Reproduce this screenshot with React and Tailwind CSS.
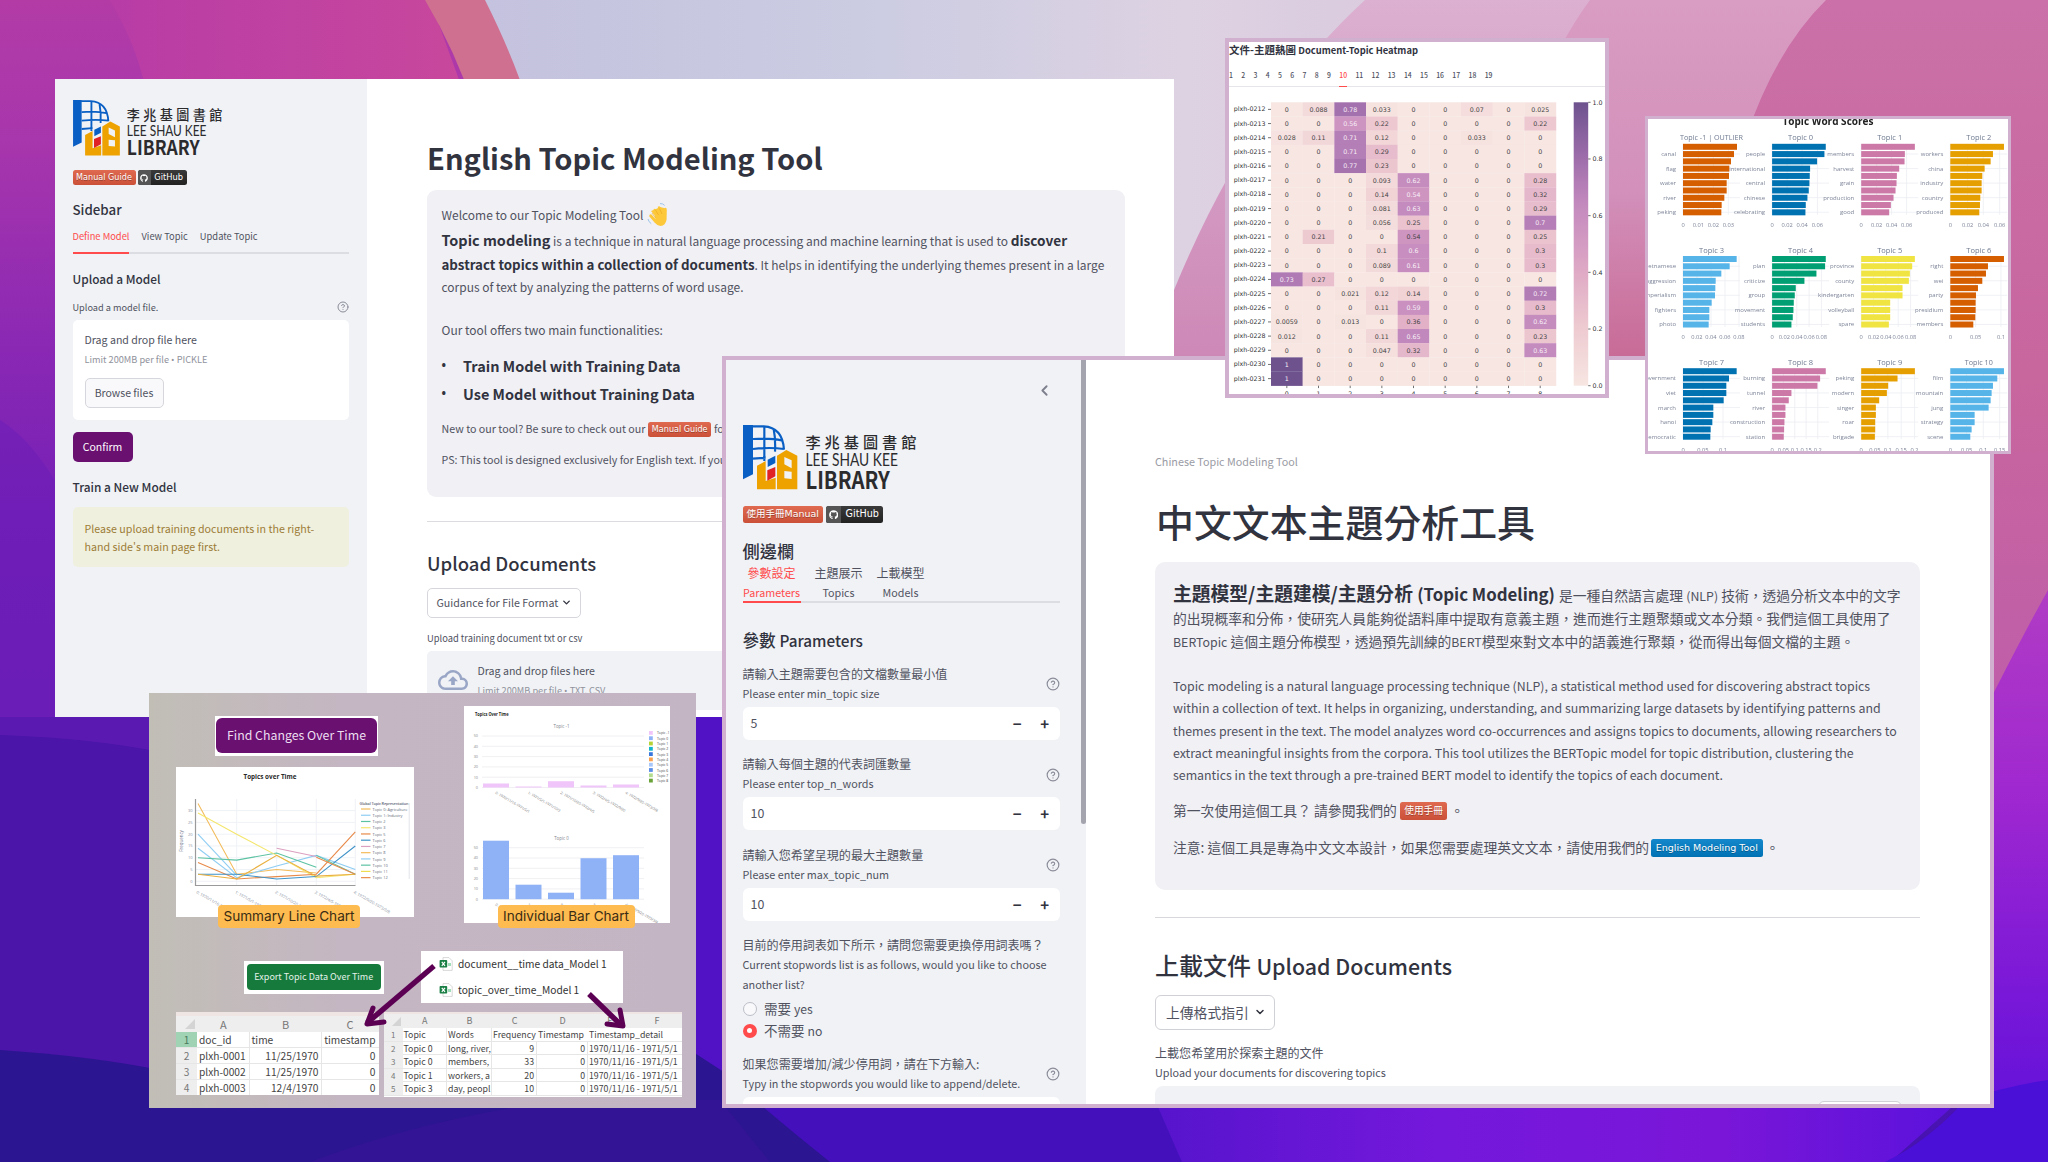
import React from 'react';
import { ChevronDown, ChevronLeft, CircleHelp } from 'lucide-react';
import { MdOutlineCloudUpload } from 'react-icons/md';
import { FaGithub } from 'react-icons/fa';

const SANS = "font-['Noto_Sans_CJK_TC',sans-serif]";

function Wallpaper() {
  return (
    <svg className="absolute inset-0 h-full w-full" viewBox="0 0 2048 1162" preserveAspectRatio="none">
      <defs>
        <linearGradient id="base" x1="0" y1="0" x2="0" y2="1">
          <stop offset="0" stopColor="#b23ba6" />
          <stop offset="0.12" stopColor="#a836ac" />
          <stop offset="0.3" stopColor="#8a28b4" />
          <stop offset="0.45" stopColor="#7420b6" />
          <stop offset="0.65" stopColor="#6a1eb8" />
          <stop offset="1" stopColor="#4512b0" />
        </linearGradient>
        <linearGradient id="mag" x1="0" y1="0" x2="1" y2="0">
          <stop offset="0" stopColor="#b83ca6" />
          <stop offset="1" stopColor="#c8489c" />
        </linearGradient>
        <linearGradient id="lav" x1="0" y1="0" x2="1" y2="0">
          <stop offset="0" stopColor="#c4c2de" />
          <stop offset="0.35" stopColor="#cbcce2" />
          <stop offset="0.65" stopColor="#ddd2e2" />
          <stop offset="1" stopColor="#d8c4dc" />
        </linearGradient>
        <linearGradient id="pinkA" x1="0" y1="0" x2="0" y2="1">
          <stop offset="0" stopColor="#dcb0d0" />
          <stop offset="0.4" stopColor="#d49cc4" />
          <stop offset="1" stopColor="#cc84b4" />
        </linearGradient>
        <linearGradient id="pinkB" x1="0" y1="0" x2="0" y2="1">
          <stop offset="0" stopColor="#d99cc2" />
          <stop offset="0.4" stopColor="#d290ba" />
          <stop offset="0.75" stopColor="#c86a96" />
          <stop offset="1" stopColor="#c45c8c" />
        </linearGradient>
        <linearGradient id="pinkC" x1="0" y1="0" x2="0" y2="1">
          <stop offset="0" stopColor="#cb70a8" />
          <stop offset="0.5" stopColor="#c8669e" />
          <stop offset="1" stopColor="#be5cac" />
        </linearGradient>
        <linearGradient id="violet" x1="0" y1="0" x2="0" y2="1">
          <stop offset="0" stopColor="#b03cc4" />
          <stop offset="0.35" stopColor="#a028d0" />
          <stop offset="0.7" stopColor="#7a18d8" />
          <stop offset="1" stopColor="#5a10da" />
        </linearGradient>
        <linearGradient id="floor" x1="0" y1="0" x2="1" y2="0">
          <stop offset="0" stopColor="#5614cc" />
          <stop offset="0.35" stopColor="#7418dc" />
          <stop offset="0.7" stopColor="#7a16d8" />
          <stop offset="1" stopColor="#5a12dc" />
        </linearGradient>
      </defs>
      <rect width="2048" height="1162" fill="url(#base)" />
      <path d="M110 0H430L470 110H150Q140 50 110 0Z" fill="url(#mag)" />
      <path d="M425 0H500L530 110H475Q455 50 425 0Z" fill="#cf7090" />
      <path d="M485 0H1560L1500 400H530V110Q515 60 485 0Z" fill="url(#lav)" />
      <path d="M1365 0Q1250 105 1174 290V400H1700V0Z" fill="url(#pinkA)" />
      <path d="M1590 0Q1560 40 1520 130V480H1900V0Z" fill="url(#pinkB)" />
      <path d="M1826 0Q1775 50 1745 140V470H1960V760H2048V0Z" fill="url(#pinkC)" />
      <path d="M2048 590Q2020 640 1980 720V1162H2048Z" fill="url(#violet)" />
      <path d="M0 420Q40 445 70 510V720H0Z" fill="#6a1cb8" opacity="0.5" />
      <path d="M0 717H160V1120H0Z" fill="#5a1ab2" />
      <path d="M0 735Q90 738 160 752V1162H0Z" fill="#4a15a8" />
      <path d="M0 1050Q90 1056 160 1070V1162H0Z" fill="#2b1590" />
      <path d="M0 1100H1000V1162H0Z" fill="#2b1590" />
      <path d="M690 710H730V1110H690Z" fill="#5012c4" />
      <path d="M690 1050L730 1076V1120H690Z" fill="#2b1590" />
      <path d="M310 1162Q420 1120 560 1100H720L770 1162Z" fill="#321494" />
      <path d="M755 1100H1165L1182 1162H830Q790 1130 755 1100Z" fill="#4410bc" />
      <path d="M1155 1100H1960L1890 1162H1182Z" fill="url(#floor)" />
      <path d="M1965 1100Q1930 1140 1885 1162H2048V1080Q2010 1085 1965 1100Z" fill="#4a10d8" />
    </svg>
  );
}

function Logo({ className }) {
  return (
    <svg className={className} viewBox="0 0 174 65">
      <g transform="scale(0.3333)">
        <path d="M0 0H30V148L0 163Z" fill="#0a5fc4" />
        <path d="M28 4H62C98 6 120 26 123 74M64 4V108M92 12Q98 42 96 80M30 42Q84 38 116 46M30 72Q82 66 123 72M30 101L68 98" fill="none" stroke="#0a5fc4" strokeWidth="6.500" />
        <path d="M42 122L68 108V168L98 158V193H42Z" fill="#eda200" />
        <path d="M74 104L97 92V114L74 126Z" fill="#0a5fc4" />
        <path d="M73 136L97 126V154L73 167Z" fill="#e02226" />
        <path fillRule="evenodd" d="M102 92L130 75L163 92V193H102ZM124 96V118L146 130V106ZM124 138V160L146 162V140Z" fill="#eda200" />
      </g>
      <g fill="#2b2b2e">
        <text x="62.4" y="23.2" fontFamily="Noto Sans CJK TC" fontWeight="500" fontSize="15.2" textLength="111" lengthAdjust="spacing">李兆基圖書館</text>
        <text x="62.4" y="41.4" fontFamily="Lato" fontSize="16.8" textLength="92.5" lengthAdjust="spacingAndGlyphs">LEE SHAU KEE</text>
        <text x="62.4" y="64.3" fontFamily="Noto Sans CJK TC" fontWeight="700" fontSize="23.4" textLength="84.5" lengthAdjust="spacingAndGlyphs">LIBRARY</text>
      </g>
    </svg>
  );
}

function Wave() {
  return (
    <svg className="ml-[4px] h-[26px] w-[22px]" viewBox="0 0 22 26">
      <path d="M4.5 12.5L8.5 17L6.5 7.5Q7.8 6 9 7.6L12 13L10.8 4.8Q12.4 3.4 13.6 5.2L15.6 12L17 6.2Q19.8 4.6 19.8 8L19.6 17.5Q18.5 23.5 13.5 24Q10 23.5 7.5 20.5L2.2 14.2Q2.4 11.4 4.5 12.5Z" fill="#fdc93a" />
      <path d="M4 9L9 7L13 5L17 6L19 10L16 14L9 15Z" fill="#fdc93a" />
      <path d="M8.5 16L5 11M11.500 13L8.5 8M15 12L12.5 6.500" stroke="#e9a41e" strokeWidth="0.6" fill="none" />
      <path d="M1 17Q1.6 20 4.2 21.6M13 1.6Q16 1.4 17.6 3.4" stroke="#9cc4ea" strokeWidth="1" fill="none" />
    </svg>
  );
}

const Badge = ({ children, className = '', tone = 'from-[#df6a50] to-[#cb5038]' }) => (
  <span className={`inline-flex items-center justify-center rounded-[2.5px] bg-gradient-to-b font-['DejaVu_Sans','Noto_Sans_CJK_TC',sans-serif] whitespace-nowrap text-white [text-shadow:0_1px_0_rgba(0,0,0,0.3)] ${tone} ${className}`}>{children}</span>
);

const GitHub = ({ className, icon }) => (
  <span className={`flex items-center overflow-hidden rounded-[2.5px] bg-gradient-to-b from-[#3a3a3a] to-[#222] font-['DejaVu_Sans',sans-serif] text-white ${className}`}>
    <span className="flex h-full w-[27%] items-center justify-center bg-[#555]"><FaGithub className={icon} /></span>
    <span className="flex-1 text-center">GitHub</span>
  </span>
);

const Dot = () => <span className="font-['Open_Sans',sans-serif]">•</span>;

const Help = ({ className = 'size-[14px]' }) => <CircleHelp className={`shrink-0 text-[#8a8c98] ${className}`} strokeWidth={2} />;

function EnglishWindow() {
  return (
    <section className="absolute top-[79px] left-[55px] flex h-[638px] w-[1119px] overflow-hidden bg-white text-[#50525f] whitespace-nowrap">
      <aside className="flex w-[312px] shrink-0 flex-col bg-[#f0f2f6] pr-[18px] pl-[17.5px]">
        <Logo className="mt-[21px] h-[56px] w-[150px]" />
        <div className="mt-[14px] flex h-[15px] gap-[2px]">
          <Badge className="w-[63px] text-[8.1px]">Manual Guide</Badge>
          <GitHub className="w-[49px] text-[8.3px]" icon="size-[8px]" />
        </div>
        <div className="mt-[15px] h-5 text-[13.3px] leading-5 font-medium text-[#31333f]">Sidebar</div>
        <div className="mt-[6px] flex h-[27.5px] shrink-0 gap-[12px] border-b-2 border-[#dcdde3] text-[9.33px] leading-5">
          <span className="h-[27.5px] border-b-2 border-[#ff4b4b] text-[#ff4b4b]">Define Model</span>
          <span>View Topic</span>
          <span>Update Topic</span>
        </div>
        <div className="mt-[15px] h-5 text-[11.85px] leading-5 font-medium text-[#31333f]">Upload a Model</div>
        <div className="mt-[8px] flex h-5 items-center justify-between text-[9.2px] leading-5"><span>Upload a model file.</span><Help className="size-[12px]" /></div>
        <div className="mt-[3px] flex h-[100px] shrink-0 flex-col rounded-[5px] bg-white px-[12px] pt-[12.5px]">
          <div className="h-4 text-[10.6px] leading-4">Drag and drop file here</div>
          <div className="mt-[4px] h-[14px] text-[9.2px] leading-[14px] text-[#90929c]">Limit 200MB per file <Dot /> PICKLE</div>
          <div className="mt-[11.5px] flex h-[30px] w-[79px] items-center justify-center rounded-[5px] border border-[#d6d7dc] bg-[#f9f9fb] text-[10.5px]">Browse files</div>
        </div>
        <div className="mt-[12px] flex h-[30px] w-[60px] shrink-0 items-center justify-center rounded-[5px] bg-[#6a1070] text-[10.5px] text-white">Confirm</div>
        <div className="mt-[15px] h-5 text-[11.9px] leading-5 font-medium text-[#31333f]">Train a New Model</div>
        <div className="mt-[10px] h-[60px] shrink-0 rounded-[5px] bg-[#f0f0de] px-[12px] pt-[13px] text-[10.68px] leading-[18px] text-[#9c7c36]">Please upload training documents in the right-<br />hand side's main page first.</div>
      </aside>
      <main className="flex w-[757.5px] flex-col pl-[60px]">
        <h1 className="mt-[58px] h-10 text-[29.1px] leading-10 font-bold text-[#31333f]">English Topic Modeling Tool</h1>
        <div className="mt-[13px] h-[307px] w-[697.5px] shrink-0 rounded-[9px] bg-[#f0f0f5] pl-[14.5px] text-[11.97px]">
          <div className="mt-[14px] flex h-[22px] items-center">Welcome to our Topic Modeling Tool <Wave /></div>
          <div className="mt-[1px] h-[25px] leading-[25px]"><b className="text-[14.45px] text-[#31333f]">Topic modeling</b> is a technique in natural language processing and machine learning that is used to <b className="text-[13.6px] text-[#31333f]">discover</b></div>
          <div className="h-[25px] leading-[25px]"><b className="text-[13.3px] text-[#31333f]">abstract topics within a collection of documents</b>. It helps in identifying the underlying themes present in a large</div>
          <div className="h-5 leading-5">corpus of text by analyzing the patterns of word usage.</div>
          <div className="mt-[23px] h-5 leading-5">Our tool offers two main functionalities:</div>
          <ul className="mt-[12px] text-[14.5px] leading-[27.5px] font-bold text-[#31333f]">
            <li className="flex"><span className="w-[21.5px] font-['Open_Sans',sans-serif] text-[12px]">•</span>Train Model with Training Data</li>
            <li className="flex"><span className="w-[21.5px] font-['Open_Sans',sans-serif] text-[12px]">•</span>Use Model without Training Data</li>
          </ul>
          <div className="mt-[12.500px] flex h-5 items-center text-[10.68px]">New to our tool? Be sure to check out our<Badge className="mx-[3px] h-[15px] w-[62.5px] text-[8.1px]">Manual Guide</Badge>for more details.</div>
          <div className="mt-[10.5px] h-5 text-[10.68px] leading-5">PS: This tool is designed exclusively for English text. If you need Chinese text, use our Chinese tool.</div>
        </div>
        <div className="mt-[24px] h-px shrink-0 bg-[#dcdce0]" />
        <h2 className="mt-[26px] h-[30px] text-[18.5px] leading-[30px] font-medium text-[#31333f]">Upload Documents</h2>
        <div className="mt-[9.5px] flex h-[30px] w-[154px] shrink-0 items-center justify-between rounded-[5px] border border-[#d6d7dc] px-[8.5px] text-[10.67px]">Guidance for File Format<ChevronDown className="size-[11px] text-[#31333f]" strokeWidth={3} /></div>
        <div className="mt-[11.5px] h-[18px] text-[9.33px] leading-[18px]">Upload training document txt or csv</div>
        <div className="mt-[3.5px] flex h-[59px] shrink-0 rounded-[5px] bg-[#f0f2f6] pl-[11px]">
          <MdOutlineCloudUpload className="mt-[14.5px] size-[30px] text-[#9aa6c6]" />
          <div className="ml-[9.5px] pt-[12.5px]">
            <div className="h-4 text-[10.6px] leading-4">Drag and drop files here</div>
            <div className="mt-[3px] h-4 text-[9.2px] leading-4 text-[#90929c]">Limit 200MB per file <Dot /> TXT, CSV</div>
          </div>
        </div>
      </main>
    </section>
  );
}

function NumberField({ zh, en, value, first }) {
  return (
    <div className={first ? 'mt-[9.5px]' : 'mt-[14.5px]'}>
      <Label zh={zh} en={en} help />
      <div className="mt-[3px] flex h-[33px] items-center rounded-[6px] bg-white pr-[1px] pl-[8px] text-[12.4px]">
        <span className="flex-1">{value}</span>
        <span className="w-[27.5px] text-center text-[15px] leading-none font-bold text-[#31333f]">−</span>
        <span className="w-[27.5px] text-center text-[15px] leading-none font-bold text-[#31333f]">+</span>
      </div>
    </div>
  );
}

function Label({ zh, en, help }) {
  return (
    <div className="flex items-center justify-between">
      <div className="leading-5">
        <div className="h-5 text-[12.06px]">{zh}</div>
        <div className="-mt-px h-[21px] text-[10.81px]">{en}</div>
      </div>
      {help && <Help className="mt-[1px] size-[14px]" />}
    </div>
  );
}

const En = ({ children, className = 'text-[12.37px]' }) => <span className={className}>{children}</span>;

function ChineseWindow() {
  return (
    <section className="absolute top-[356px] left-[722px] flex h-[752px] w-[1272px] overflow-hidden border-4 border-[#d0b0ce] bg-white text-[#50525f] whitespace-nowrap">
      <aside className="flex h-[820px] w-[355px] shrink-0 flex-col bg-[#f0f2f6] pr-[21.5px] pl-[16.5px]">
        <div className="mt-[20px] flex h-5 shrink-0 items-center justify-end pr-[7px]"><ChevronLeft className="size-[17px] text-[#7d7f8c]" strokeWidth={2.6} /></div>
        <Logo className="mt-[24.5px] h-[65px] w-[174px] shrink-0" />
        <div className="mt-[16.5px] flex h-[17px] shrink-0 gap-[3px]">
          <Badge className="w-[80.5px] text-[9.5px]">使用手冊Manual</Badge>
          <GitHub className="w-[57px] text-[9.6px]" icon="size-[9.5px]" />
        </div>
        <div className="mt-[15.5px] h-6 shrink-0 text-[17.2px] leading-6 font-medium text-[#31333f]">側邊欄</div>
        <div className="mt-[0.5px] flex h-[40px] shrink-0 border-b-2 border-[#dcdde3] text-center leading-5">
          <div className="h-[40px] w-[58px] border-b-2 border-[#ff4b4b] text-[#ff4b4b]"><div className="h-5 text-[12px]">參數設定</div><div className="text-[10.74px]">Parameters</div></div>
          <div className="ml-[14px] w-[48px]"><div className="h-5 text-[12px]">主題展示</div><div className="text-[10.74px]">Topics</div></div>
          <div className="ml-[14px] w-[48px]"><div className="h-5 text-[12px]">上載模型</div><div className="text-[10.74px]">Models</div></div>
        </div>
        <div className="mt-[23px] h-7 shrink-0 text-[16.6px] leading-7 font-medium text-[#31333f]">參數 <En className="text-[15.3px]">Parameters</En></div>
        <NumberField first zh="請輸入主題需要包含的文檔數量最小值" en="Please enter min_topic size" value="5" />
        <NumberField zh="請輸入每個主題的代表詞匯數量" en="Please enter top_n_words" value="10" />
        <NumberField zh="請輸入您希望呈現的最大主題數量" en="Please enter max_topic_num" value="10" />
        <div className="mt-[14px] h-[60px] shrink-0 leading-5">
          <div className="h-5 text-[12.06px]">目前的停用詞表如下所示，請問您需要更換停用詞表嗎？</div>
          <div className="-mt-px text-[10.83px]">Current stopwords list is as follows, would you like to choose<br />another list?</div>
        </div>
        <div className="mt-[4px] flex h-5 shrink-0 items-center gap-[7.5px] text-[13.5px]"><span className="size-[14px] rounded-full border border-[#bcbec8] bg-[#f9f9fb]" /><span>需要 <En className="text-[12.2px]">yes</En></span></div>
        <div className="mt-[2px] flex h-5 shrink-0 items-center gap-[7.5px] text-[13.5px]"><span className="flex size-[14px] items-center justify-center rounded-full bg-[#ff4b4b]"><span className="size-[5px] rounded-full bg-white" /></span><span>不需要 <En className="text-[12.2px]">no</En></span></div>
        <div className="mt-[13px] shrink-0"><Label help zh="如果您需要增加/減少停用詞，請在下方輸入:" en="Typy in the stopwords you would like to append/delete." /></div>
        <div className="mt-[3px] h-[40px] shrink-0 rounded-[6px] bg-white" />
      </aside>
      <div className="w-[5px] shrink-0 bg-[#f0f2f6]"><div className="h-[464px] rounded-b-[3px] bg-[#a3a4ae]" /></div>
      <main className="flex h-[820px] w-[834px] shrink-0 flex-col pl-[69px]">
        <div className="mt-[93px] h-4 shrink-0 text-[10.78px] leading-4 text-[#9a9ba4]">Chinese Topic Modeling Tool</div>
        <h1 className="mt-[27px] ml-px h-[50px] shrink-0 text-[37.9px] leading-[50px] font-medium text-[#31333f]">中文文本主題分析工具</h1>
        <div className="mt-[16px] h-[327.5px] shrink-0 rounded-[10px] bg-[#f0f0f5] pl-[18px] text-[13.81px] leading-[22px]">
          <div className="mt-[18px] h-[26px] text-[18.8px] leading-[26px]"><b className="text-[#31333f]">主題模型/主題建模/主題分析 <En className="text-[16.84px]">(Topic Modeling)</En></b><span className="ml-[4px] text-[13.81px]">是一種自然語言處理 <En>(NLP)</En> 技術，透過分析文本中的文字</span></div>
          <div className="mt-[1px] h-[22px]">的出現概率和分佈，使研究人員能夠從語料庫中提取有意義主題，進而進行主題聚類或文本分類。我們這個工具使用了</div>
          <div className="mt-[1px] h-[22px]"><En>BERTopic</En> 這個主題分佈模型，透過預先訓練的<En>BERT</En>模型來對文本中的語義進行聚類，從而得出每個文檔的主題。</div>
          <p className="mt-[23px] text-[12.38px] leading-[22.25px]">Topic modeling is a natural language processing technique (NLP), a statistical method used for discovering abstract topics<br />within a collection of text. It helps in organizing, understanding, and summarizing large datasets by identifying patterns and<br />themes present in the text. The model analyzes word co-occurrences and assigns topics to documents, allowing researchers to<br />extract meaningful insights from the corpora. This tool utilizes the BERTopic model for topic distribution, clustering the<br />semantics in the text through a pre-trained BERT model to identify the topics of each document.</p>
          <div className="mt-[12.500px] flex h-[22px] items-center">第一次使用這個工具？ 請參閱我們的<Badge className="mt-[3px] mr-[3px] ml-[3px] h-[18px] w-[47.5px] text-[9.7px]">使用手冊</Badge>。</div>
          <div className="mt-[15px] flex h-[22px] items-center">注意: 這個工具是專為中文文本設計，如果您需要處理英文文本，請使用我們的<Badge tone="from-[#1488cc] to-[#0072b4]" className="mt-[2px] mr-[3px] ml-[2px] h-[18px] w-[111.5px] text-[9.5px]">English Modeling Tool</Badge>。</div>
        </div>
        <div className="mt-[27.5px] h-px shrink-0 bg-[#d8d8dc]" />
        <h2 className="mt-[30px] h-[34px] shrink-0 text-[24px] leading-[34px] font-medium text-[#31333f]">上載文件 <En className="text-[21.4px]">Upload Documents</En></h2>
        <div className="mt-[13px] flex h-[34.5px] w-[120px] shrink-0 items-center justify-between rounded-[6px] border border-[#d0d1d6] pr-[8px] pl-[10px] text-[13.8px]">上傳格式指引<ChevronDown className="size-[12px] text-[#31333f]" strokeWidth={3} /></div>
        <div className="mt-[13px] h-5 shrink-0 text-[12.06px] leading-5">上載您希望用於探索主題的文件</div>
        <div className="-mt-px h-[20.5px] shrink-0 text-[10.79px] leading-5">Upload your documents for discovering topics</div>
        <div className="mt-[4px] flex h-[60px] shrink-0 justify-end rounded-[8px] bg-[#f0f2f6] pt-[14.5px] pr-[18px]"><div className="h-[40px] w-[84px] rounded-[6px] border border-[#d0d1d6] bg-white" /></div>
      </main>
    </section>
  );
}

const HEAT = [
  ['0212', '0 0.088 0.78 0.033 0 0 0.07 0 0.025'], ['0213', '0 0 0.56 0.22 0 0 0 0 0.22'],
  ['0214', '0.028 0.11 0.71 0.12 0 0 0.033 0 0'], ['0215', '0 0 0.71 0.29 0 0 0 0 0'],
  ['0216', '0 0 0.77 0.23 0 0 0 0 0'], ['0217', '0 0 0 0.093 0.62 0 0 0 0.28'],
  ['0218', '0 0 0 0.14 0.54 0 0 0 0.32'], ['0219', '0 0 0 0.081 0.63 0 0 0 0.29'],
  ['0220', '0 0 0 0.056 0.25 0 0 0 0.7'], ['0221', '0 0.21 0 0 0.54 0 0 0 0.25'],
  ['0222', '0 0 0 0.1 0.6 0 0 0 0.3'], ['0223', '0 0 0 0.089 0.61 0 0 0 0.3'],
  ['0224', '0.73 0.27 0 0 0 0 0 0 0'], ['0225', '0 0 0.021 0.12 0.14 0 0 0 0.72'],
  ['0226', '0 0 0 0.11 0.59 0 0 0 0.3'], ['0227', '0.0059 0 0.013 0 0.36 0 0 0 0.62'],
  ['0228', '0.012 0 0 0.11 0.65 0 0 0 0.23'], ['0229', '0 0 0 0.047 0.32 0 0 0 0.63'],
  ['0230', '1 0 0 0 0 0 0 0 0'], ['0231', '1 0 0 0 0 0 0 0 0'],
];
const STOPS = [[0, 247, 230, 226], [0.2, 238, 203, 209], [0.4, 223, 170, 197], [0.55, 206, 148, 193], [0.63, 196, 139, 190], [0.72, 178, 124, 181], [0.8, 158, 110, 171], [1, 109, 82, 142]];
function shade(v) {
  let i = 1;
  while (i < STOPS.length - 1 && v > STOPS[i][0]) i += 1;
  const a = STOPS[i - 1], b = STOPS[i], t = (v - a[0]) / (b[0] - a[0]);
  return `rgb(${[1, 2, 3].map((k) => Math.round(a[k] + (b[k] - a[k]) * t)).join(',')})`;
}

function Heatmap() {
  const cw = 31.67, rh = 14.17, x0 = 42, y0 = 60.3;
  return (
    <section className="absolute top-[38px] left-[1225px] flex h-[360px] w-[384px] flex-col overflow-hidden border-4 border-[#d0b0ce] bg-white whitespace-nowrap">
      <div className="h-4 text-[10.5px] leading-4 font-bold text-[#31333f]">文件-主題熱圖 <span className="text-[9.4px]">Document-Topic Heatmap</span></div>
      <div className="mt-[11px] flex h-[18px] shrink-0 gap-[8.35px] border-b border-[#e6e6ea] text-[6.85px] leading-[13px] font-medium text-[#50525f]">
        {Array.from({ length: 19 }, (_, i) => (
          <span key={i} className={i === 9 ? 'h-[18px] border-b border-[#ff4b4b] text-[#ff4b4b]' : ''}>{i + 1}</span>
        ))}
      </div>
      <svg className="-mt-[45px] h-[352px] w-[376px] shrink-0" viewBox="0 0 376 352" fontFamily="DejaVu Sans" fontSize="6.3">
        <defs>
          <linearGradient id="bar" x1="0" y1="1" x2="0" y2="0">
            {STOPS.map((s) => <stop key={s[0]} offset={s[0]} stopColor={shade(s[0])} />)}
          </linearGradient>
        </defs>
        {HEAT.map(([id, row], r) => (
          <g key={id}>
            <text x="36.5" y={y0 + rh * (r + 0.5) + 2} textAnchor="end" fill="#333">plxh-{id}</text>
            <path d={`M39 ${y0 + rh * (r + 0.5)}h3`} stroke="#333" strokeWidth="0.7" />
            {row.split(' ').map((v, c) => (
              <g key={c}>
                <rect x={x0 + cw * c} y={y0 + rh * r} width={cw + 0.2} height={rh + 0.2} fill={shade(+v)} />
                <text x={x0 + cw * (c + 0.5)} y={y0 + rh * (r + 0.5) + 2.4} textAnchor="middle" fill={+v > 0.5 && !(id === '0221') ? '#f7eef6' : '#444'}>{v}</text>
              </g>
            ))}
          </g>
        ))}
        {[0, 1, 2, 3, 4, 5, 6, 7, 8].map((c) => (
          <g key={c}>
            <path d={`M${x0 + cw * (c + 0.5)} 343.7v2.4`} stroke="#333" strokeWidth="0.7" />
            <text x={x0 + cw * (c + 0.5)} y="353.5" textAnchor="middle" fill="#333">{c}</text>
          </g>
        ))}
        <rect x="344.7" y={y0} width="14.5" height="283.4" fill="url(#bar)" />
        {['0.0', '0.2', '0.4', '0.6', '0.8', '1.0'].map((t, i) => (
          <g key={t}>
            <path d={`M359.2 ${343.7 - i * 56.68}h2.4`} stroke="#333" strokeWidth="0.7" />
            <text x="363.4" y={346 - i * 56.68} fill="#333">{t}</text>
          </g>
        ))}
      </svg>
    </section>
  );
}

const SCORES = [
  ['Topic -1 | OUTLIER', '#D55E00', [162, 153, 144, 139, 138, 131, 131, 124, 116, 115], ['canal', 'flag', 'water', 'river', 'peking'], [['0', 0], ['0.01', 46], ['0.02', 91], ['0.03', 136]]],
  ['Topic 0', '#0072B2', [161, 157, 135, 114, 113, 112, 110, 106, 101, 100], ['people', 'international', 'central', 'chinese', 'celebrating'], [['0', 0], ['0.02', 45], ['0.04', 90], ['0.06', 136]]],
  ['Topic 1', '#CC79A7', [161, 131, 130, 114, 107, 106, 103, 97, 89, 84], ['members', 'harvest', 'grain', 'production', 'good'], [['0', 0], ['0.02', 46], ['0.04', 91], ['0.06', 136]]],
  ['Topic 2', '#E69F00', [161, 128, 121, 103, 96, 94, 94, 90, 89, 87], ['workers', 'china', 'industry', 'country', 'produced'], [['0', 0], ['0.02', 52], ['0.04', 99], ['0.06', 148]]],
  ['Topic 3', '#56B4E9', [161, 140, 115, 98, 97, 96, 86, 79, 79, 77], ['vietnamese', 'aggression', 'imperialism', 'fighters', 'photo'], [['0', 0], ['0.02', 42], ['0.04', 84], ['0.06', 126], ['0.08', 168]]],
  ['Topic 4', '#009E73', [161, 159, 133, 97, 71, 68, 65, 64, 62, 58], ['plan', 'criticize', 'group', 'movement', 'students'], [['0', 0], ['0.02', 37], ['0.04', 74], ['0.06', 111], ['0.08', 148]]],
  ['Topic 5', '#F0E442', [161, 153, 146, 143, 124, 124, 87, 87, 87, 83], ['province', 'county', 'kindergarten', 'volleyball', 'spare'], [['0', 0], ['0.02', 37], ['0.04', 74], ['0.06', 111], ['0.08', 148]]],
  ['Topic 6', '#D55E00', [161, 113, 107, 96, 83, 77, 76, 76, 75, 69], ['right', 'wei', 'party', 'presidium', 'members'], [['0', 0], ['0.05', 76], ['0.1', 152]]],
  ['Topic 7', '#0072B2', [161, 138, 130, 130, 122, 91, 91, 88, 83, 82], ['government', 'viet', 'march', 'hanoi', 'democratic'], [['0', 0], ['0.05', 60], ['0.1', 120]]],
  ['Topic 8', '#CC79A7', [161, 144, 136, 58, 50, 40, 40, 37, 36, 35], ['burning', 'tunnel', 'river', 'construction', 'station'], [['0', 0], ['0.05', 34], ['0.1', 68], ['0.15', 102], ['0.2', 137]]],
  ['Topic 9', '#E69F00', [161, 109, 81, 77, 54, 44, 44, 42, 42, 41], ['peking', 'modern', 'singer', 'roar', 'brigade'], [['0', 0], ['0.05', 41], ['0.1', 80], ['0.15', 120], ['0.2', 160]]],
  ['Topic 10', '#56B4E9', [161, 141, 128, 124, 121, 115, 73, 73, 64, 60], ['film', 'mountain', 'jung', 'strategy', 'scene'], [['0', 0], ['0.05', 49], ['0.1', 99], ['0.15', 148]]],
];

function WordScores() {
  return (
    <section className="absolute top-[116px] left-[1645px] h-[338px] w-[366px] overflow-hidden border-[3px] border-[#d0b0ce] bg-white">
      <svg className="h-[332px] w-[360px] blur-[0.6px]" viewBox="0 0 360 332" fontFamily="Open Sans">
        <text x="180" y="6.3" textAnchor="middle" fontSize="10" fontWeight="700" fill="#222" textLength="91">Topic Word Scores</text>
        {SCORES.map(([title, color, bars, words, ticks], i) => (
          <g key={title} transform={`translate(${35 + (i % 4) * 89.1} ${24.8 + Math.floor(i / 4) * 112.2})`}>
            {ticks.map(([t, x]) => <path key={t} d={`M${x / 3} 0V71`} stroke="#eceef3" strokeWidth="0.8" />)}
            {words.map((w, k) => <path key={k} d={`M0 ${10.2 + k * 14.56}H57`} stroke="#eceef3" strokeWidth="0.8" />)}
            <text x="28.5" y="-3.4" textAnchor="middle" fontSize="7.8" fill="#6f7a90" textLength={title.length > 9 ? 63 : title.length > 7 ? 28 : 25} lengthAdjust="spacingAndGlyphs">{title}</text>
            {bars.map((b, k) => <rect key={k} x="0" y={k * 7.28} width={b / 3} height="6" fill={color} />)}
            {words.map((w, k) => <text key={k} x="-7" y={12.2 + k * 14.56} textAnchor="end" fontSize="6" fill="#7d8598">{w}</text>)}
            {ticks.map(([t, x]) => <text key={t} x={x / 3} y="83.4" textAnchor="middle" fontSize="5.7" fill="#7d8598">{t}</text>)}
          </g>
        ))}
      </svg>
    </section>
  );
}

const XS = [22, 60.7, 100.7, 140.3, 179.3];
const LINES = [
  ['#f3bc5c', [33, 3, 5, 3.5]], ['#8fcdf3', [20, 2.5]], ['#8fcdf3', [14, 1.5, 6.5, 11, 5]],
  ['#5cc2a2', [10, 9, 12, 6]], ['#f4e66e', [29, 20, 11, 1.5, 3]], ['#e88a4a', [8, 1, 2, 3, 21]],
  ['#3f93c8', [3, 3, 1, 2, 15]], ['#dba0c0', [null, null, 14, 10.5]], ['#eab040', [3, 1, 11, 2.2, 3]],
  ['#5cc2a2', [null, null, null, 11, 3]], ['#e88a4a', [null, null, null, 10.2, 3]],
];
const LEG = ['#f3bc5c', '#8fcdf3', '#5cc2a2', '#f4e66e', '#e88a4a', '#3f93c8', '#dba0c0', '#f3bc5c', '#8fcdf3', '#5cc2a2', '#f0dc50', '#e88a4a'];
const DATES = ['0: 1970/11/16-1971/5/1', '1: 1971/5/1-1971/10/3', '2: 1971/10/20-1972/4/5', '3: 1972/4/5-1972/9/20', '4: 1972/9/20-1973/3/8'];

function LineChart() {
  const y = (v) => 114.3 - v * 2.357;
  return (
    <svg className="h-[150.5px] w-[237.5px] bg-white" viewBox="0 0 237.5 150.5" fontFamily="Open Sans">
      <text x="94" y="12" textAnchor="middle" fontSize="6.8" fontWeight="700" fill="#2a2a2a" textLength="53" lengthAdjust="spacingAndGlyphs">Topics over Time</text>
      {XS.slice(1).map((x) => <path key={x} d={`M${x} 32V118`} stroke="#edf0f5" strokeWidth="0.9" />)}
      {[0, 5, 10, 15, 20, 25, 30].map((v) => (
        <g key={v}><path d={`M19 ${y(v)}H179`} stroke="#edf0f5" strokeWidth="0.9" /><text x="16.5" y={y(v) + 1.5} fontSize="4" textAnchor="end" fill="#8890a0">{v}</text></g>
      ))}
      <path d="M19.5 32V118.5H179.5" stroke="#9a9a9a" strokeWidth="1.2" fill="none" />
      {LINES.map(([c, v], i) => <polyline key={i} fill="none" stroke={c} strokeWidth="1.1" points={v.map((n, k) => (n === null ? '' : `${XS[k]},${y(n)}`)).join(' ')} />)}
      <text transform="translate(6.5 74) rotate(-90)" fontSize="4.4" textAnchor="middle" fill="#70788a">Frequency</text>
      {DATES.map((d, i) => <text key={d} transform={`translate(${XS[i] - 2} 126) rotate(30)`} fontSize="4" fill="#8890a0">{d}</text>)}
      <text x="183.5" y="37.5" fontSize="3.9" fontWeight="600" fill="#606878" textLength="49">Global Topic Representation</text>
      {LEG.map((c, i) => (
        <g key={i}><path d={`M185 ${42 + i * 6.24}h9.5`} stroke={c} strokeWidth="1.2" /><text x="196.5" y={43.6 + i * 6.24} fontSize="3.9" fill="#606878">{i === 0 ? 'Topic 0: Agriculture' : i === 1 ? 'Topic 1: Industry' : `Topic ${i + (i > 3 ? 1 : 0)}`}</text></g>
      ))}
      <path d="M233.2 36V112" stroke="#e2e4e8" strokeWidth="1" />
    </svg>
  );
}

const SQ = ['#f0c6fa', '#8fb2f6', '#b5d334', '#12b5cb', '#3b78de', '#fba04c', '#a8c7fa', '#5a8ee8', '#b4dc8e', '#6aa338'];
function BarChart() {
  const part = (title, base, color, h) => (
    <g transform={`translate(0 ${base})`}>
      <text x="97.5" y="-59.5" textAnchor="middle" fontSize="4.4" fill="#80848c">{title}</text>
      {[0, 1, 2, 3, 4, 5].map((k) => (
        <g key={k}><path d={`M18 ${-k * 10.3}H180`} stroke="#ececf0" strokeWidth="0.8" /><text x="14" y={1.4 - k * 10.3} fontSize="3.8" textAnchor="end" fill="#888">{k * 10}</text></g>
      ))}
      {h.map((v, k) => <rect key={k} x={19 + k * 32.5} y={-v} width="26" height={v} fill={color} />)}
      {DATES.map((d, k) => <text key={k} transform={`translate(${31 + k * 32.5} 6) rotate(30)`} fontSize="3.6" fill="#777">{d}</text>)}
    </g>
  );
  return (
    <svg className="h-[217px] w-[206px] bg-white" viewBox="0 0 206 217" fontFamily="Open Sans">
      <text x="11" y="9.8" fontSize="4.4" fontWeight="700" fill="#222" textLength="33.5" lengthAdjust="spacingAndGlyphs">Topics Over Time</text>
      {part('Topic -1', 81.5, '#f0c6fa', [4, 1, 6.3, 2, 3])}
      {part('Topic 0', 193.2, '#8fb2f6', [58.5, 14.5, 6.5, 41, 44])}
      {SQ.map((c, i) => <g key={c}><rect x="185" y={25 + i * 5.3} width="3.8" height="3.8" fill={c} /><text x="193" y={28.4 + i * 5.3} fontSize="3.4" fill="#444">Topic {i - 1}</text></g>)}
    </svg>
  );
}

const XlsIcon = () => (
  <svg className="size-[14px]" viewBox="0 0 14 14">
    <path d="M4 0.6H10L13.2 3.8V13.4H4Z" fill="#fff" stroke="#c8c8c8" strokeWidth="0.7" />
    <path d="M9 6H12V9H9Z" fill="#9fdcb8" />
    <rect x="0.6" y="3" width="7.6" height="7.6" rx="0.8" fill="#1a7f45" />
    <path d="M2.8 4.8L6 8.8M6 4.8L2.8 8.8" stroke="#fff" strokeWidth="1.2" />
  </svg>
);

const SHEET1 = [['1', 'doc_id', 'time', 'timestamp'], ['2', 'plxh-0001', '11/25/1970', '0'], ['3', 'plxh-0002', '11/25/1970', '0'], ['4', 'plxh-0003', '12/4/1970', '0']];
const SHEET2 = [['1', 'Topic', 'Words', 'Frequency', 'Timestamp', 'Timestamp_detail'], ['2', 'Topic 0', 'long, river,', '9', '0'], ['3', 'Topic 0', 'members,', '33', '0'], ['4', 'Topic 1', 'workers, a', '20', '0'], ['5', 'Topic 3', 'day, peopl', '10', '0']];

function TimePanel() {
  return (
    <section className="absolute top-[693px] left-[149px] h-[414.5px] w-[547px] overflow-hidden bg-gradient-to-r from-[#c1beb6] via-[#c4b6c2] via-35% to-[#c4b5c4] whitespace-nowrap">
      <div className="flex h-[230px]">
        <div className="ml-[27px] w-[237.5px] pt-[22.5px]">
          <div className="ml-[39px] flex h-[40px] w-[163px] flex-col bg-white px-[1px] pt-[2.5px]"><div className="flex h-[34.5px] items-center justify-center rounded-[6px] bg-[#6a1070] text-[12.33px] text-[#ecdff0]">Find Changes Over Time</div></div>
          <div className="mt-[11px]"><LineChart /></div>
        </div>
        <div className="ml-[50px] pt-[13px]"><BarChart /></div>
      </div>
      <div className="relative -mt-[18px] flex h-[23px] font-['Inter',sans-serif] text-[#3a2c14]">
        <div className="ml-[69px] flex h-[22.5px] w-[142px] items-center justify-center rounded-[4px] bg-[#fdbb50] text-[13.6px]">Summary Line Chart</div>
        <div className="ml-[137.5px] flex h-[22.5px] w-[137px] items-center justify-center rounded-[4px] bg-[#fdbb50] text-[13.57px]">Individual Bar Chart</div>
      </div>
      <div className="mt-[23px] flex h-[52px]">
        <div className="mt-[10px] ml-[94.5px] h-[33px] w-[140.5px] bg-white px-[3px] pt-[3px]"><div className="flex h-[26px] items-center justify-center rounded-[4px] bg-[#157a3c] text-[9.03px] text-[#e6f2ea]">Export Topic Data Over Time</div></div>
        <div className="ml-[37px] flex w-[202px] flex-col bg-white pl-[18px] text-[10.2px] text-[#333]">
          <div className="flex h-[26px] items-center gap-[5px]"><XlsIcon />document__time data_Model 1</div>
          <div className="flex h-[26px] items-center gap-[5px]"><XlsIcon />topic_over_time_Model 1</div>
        </div>
      </div>
      <div className="mt-[9px] flex text-[#444]">
        <div className="ml-[27px] h-[83px] w-[202.5px] overflow-hidden border-t-4 border-[#efe6e3] bg-white text-[10.2px]">
          <div className="grid h-[16px] grid-cols-[21px_52.5px_72px_57px] items-center bg-[#eeeeee] text-center text-[11px] text-[#777]"><svg className="ml-[9px] size-[10px]" viewBox="0 0 10 10"><path d="M10 0V10H0Z" fill="#d4d4d4" /></svg><span>A</span><span>B</span><span>C</span></div>
          {SHEET1.map((r, i) => (
            <div key={r[0]} className="grid h-[15.9px] grid-cols-[21px_52.5px_72px_57px] border-b border-[#e6e6e6] leading-[15px]">
              <span className={i === 0 ? 'bg-[#9fd3b4] text-center text-[#4a7a5c]' : 'bg-[#eeeeee] text-center text-[#777]'}>{r[0]}</span>
              <span className="border-r border-[#e6e6e6] pl-[2px]">{r[1]}</span>
              <span className={i === 0 ? 'border-r border-[#e6e6e6] pl-[2px]' : 'border-r border-[#e6e6e6] pr-[2px] text-right'}>{r[2]}</span>
              <span className="pr-[3px] text-right">{r[3]}</span>
            </div>
          ))}
        </div>
        <div className="ml-[5.5px] h-[85px] w-[298px] overflow-hidden border-t-2 border-[#efe6e3] bg-white text-[8.75px]">
          <div className="grid h-[14px] grid-cols-[18.5px_44.5px_45px_45px_51px_44px_50px] items-center bg-[#eeeeee] text-center text-[9px] text-[#777]"><svg className="ml-[8px] size-[9px]" viewBox="0 0 10 10"><path d="M10 0V10H0Z" fill="#d4d4d4" /></svg><span>A</span><span>B</span><span>C</span><span>D</span><span>E</span><span>F</span></div>
          {SHEET2.map((r, i) => (
            <div key={r[0]} className="grid h-[13.5px] grid-cols-[18.5px_44.5px_45px_45px_51px_94px] border-b border-[#e6e6e6] leading-[13px]">
              <span className="bg-[#eeeeee] text-center text-[8px] text-[#777]">{r[0]}</span>
              <span className="border-r border-[#e6e6e6] pl-[1px]">{r[1]}</span>
              <span className="overflow-hidden border-r border-[#e6e6e6] pl-[1px]">{r[2]}</span>
              <span className={i === 0 ? 'pl-[1px]' : 'border-r border-[#e6e6e6] pr-[2px] text-right'}>{r[3]}</span>
              <span className={i === 0 ? 'pl-[1px]' : 'border-r border-[#e6e6e6] pr-[2px] text-right'}>{r[4]}</span>
              <span className="pl-[1px]">{r[5] || '1970/11/16 - 1971/5/1'}</span>
            </div>
          ))}
        </div>
      </div>
      <svg className="absolute top-[263px] left-[205px] h-[80px] w-[280px]" viewBox="0 0 280 80" fill="none" stroke="#5c0054" strokeWidth="5.4" strokeLinecap="butt">
        <path d="M80 10L13 67" />
        <path d="M19 52L13 68L30 66" strokeWidth="5" strokeLinejoin="round" strokeLinecap="round" />
        <path d="M235 38L267 69" />
        <path d="M253 68L269 70L266 54" strokeWidth="5" strokeLinejoin="round" strokeLinecap="round" />
      </svg>
    </section>
  );
}

export default function App() {
  return (
    <div className={`relative h-[1162px] w-[2048px] overflow-hidden ${SANS}`} lang="zh-Hant">
      <Wallpaper />
      <EnglishWindow />
      <ChineseWindow />
      <Heatmap />
      <WordScores />
      <TimePanel />
    </div>
  );
}
